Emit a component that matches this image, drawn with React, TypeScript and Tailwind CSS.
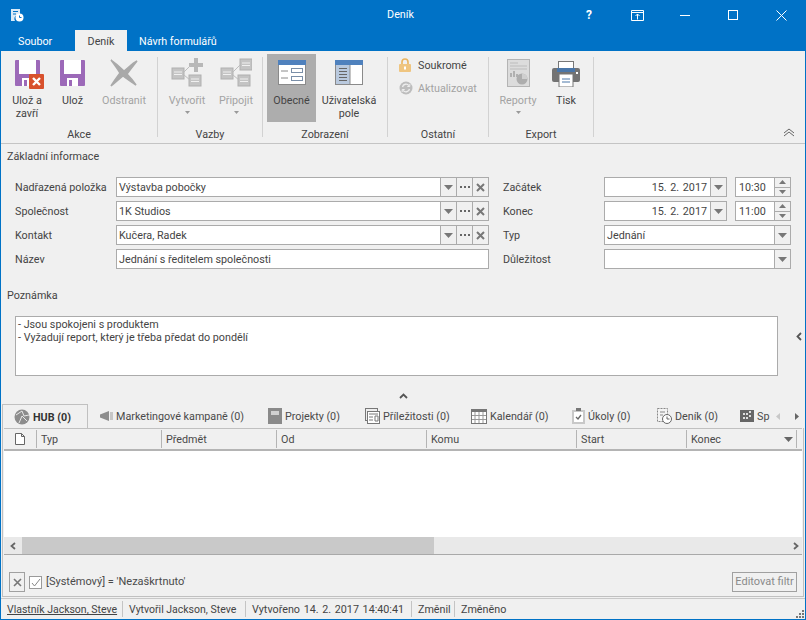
import { ReactNode } from "react";

const Caret = ({ color = "#777" }: { color?: string }) => (
  <svg width="9" height="5" viewBox="0 0 9 5"><path d="M0 0h9L4.5 5z" fill={color} /></svg>
);

function SaveIcon() {
  return (
    <svg width="25" height="26" viewBox="0 0 25 26">
      <rect width="25" height="26" rx="1" fill="#9c69b8" />
      <rect x="4" y="0" width="17" height="14" fill="#fff" />
      <rect x="7" y="18" width="11" height="8" fill="#fff" />
      <rect x="9" y="20" width="3" height="6" fill="#9c69b8" />
    </svg>
  );
}

function BigX() {
  return (
    <svg width="30" height="29" viewBox="0 0 30 29">
      <path d="M2 2C8 6 12 10 15 13C20 9 24 5 28 3C24 8 21 12 18 16C22 20 25 24 27 27C22 24 18 21 14 18C10 21 6 25 2 28C5 23 8 19 11 15C8 10 5 6 2 2z" fill="#a9a9a9" stroke="#a9a9a9" strokeWidth="1.500" />
    </svg>
  );
}

function TreeIcon({ plus }: { plus?: boolean }) {
  const node = (x: number, y: number) => (
    <g>
      <rect x={x} y={y} width="12" height="11" fill="#c4c4c4" stroke="#b0b0b0" />
      <path d={`M${x + 2} ${y + 4}h8M${x + 2} ${y + 6.5}h8`} stroke="#f0f0f0" />
    </g>
  );
  return (
    <svg width="32" height="30" viewBox="0 0 32 30">
      {node(1, 10)}
      {node(18, 17)}
      {plus ? <path d="M23 0h4v5h5v4h-5v5h-4V9h-5V5h5z" fill="#b8b8b8" /> : node(20, 1)}
      <path d="M13 14l7-7M13 17l6 5" stroke="#bdbdbd" fill="none" />
    </svg>
  );
}

function ObecneIcon() {
  return (
    <svg width="28" height="25" viewBox="0 0 28 25">
      <rect x=".5" y=".5" width="27" height="24" fill="#fff" stroke="#8a8a8a" />
      <rect width="28" height="5" fill="#4f81bd" />
      <path d="M3 11h7M3 18h7" stroke="#8a8a8a" />
      <rect x="13.5" y="8.5" width="11" height="4" fill="#fff" stroke="#7a8fa8" />
      <rect x="13.5" y="16.5" width="11" height="4" fill="#fff" stroke="#7a8fa8" />
    </svg>
  );
}

function UserFieldsIcon() {
  return (
    <svg width="28" height="25" viewBox="0 0 28 25">
      <rect x=".5" y=".5" width="27" height="24" fill="#fff" stroke="#8a8a8a" />
      <rect x="1" y="5" width="14" height="19" fill="#b9c9de" />
      <rect width="28" height="5" fill="#4f81bd" />
      <path d="M4 8.5h8M4 11.5h8M4 14.5h8M4 17.5h8M4 20.5h8" stroke="#666" />
      <path d="M15 5v19" stroke="#8a8a8a" />
    </svg>
  );
}

function ReportIcon() {
  return (
    <svg width="23" height="28" viewBox="0 0 23 28">
      <rect x=".5" y=".5" width="22" height="27" fill="#dcdcdc" stroke="#b4b4b4" />
      <path d="M3 4h8M3 7h17M3 10h17" stroke="#bcbcbc" />
      <path d="M3 18h2v-4h-2zM6 18h2v-6h-2zM9 18h2v-3h-2z" fill="#b0b0b0" />
      <circle cx="15" cy="20" r="5.5" fill="#adadad" />
      <path d="M15 20v-5.5a5.5 5.5 0 0 1 5.5 5.5z" fill="#cfcfcf" />
    </svg>
  );
}

function PrinterIcon() {
  return (
    <svg width="28" height="26" viewBox="0 0 28 26">
      <rect x="6.5" y=".5" width="15" height="11" fill="#fff" stroke="#777" />
      <rect y="7" width="28" height="14" rx="2" fill="#737373" />
      <rect x="5" y="7" width="18" height="4" fill="#4a76a8" />
      <rect x="7" y="13" width="14" height="13" fill="#fff" stroke="#777" />
      <path d="M10 18h8M10 21h8" stroke="#4a76a8" />
      <rect x="24" y="11" width="2" height="2" fill="#fff" />
    </svg>
  );
}

function LockIcon() {
  return (
    <svg width="12" height="14" viewBox="0 0 12 14">
      <path d="M3 6V4a3 3 0 0 1 6 0v2" fill="none" stroke="#e9b45f" strokeWidth="1.6" />
      <rect y="6" width="12" height="8" rx="1" fill="#efc580" />
      <rect x="5" y="8.5" width="2" height="3" fill="#fff" />
    </svg>
  );
}

function RefreshIcon() {
  return (
    <svg width="14" height="14" viewBox="0 0 14 14">
      <circle cx="7" cy="7" r="6.5" fill="#bdbdbd" />
      <path d="M3.5 6a3.6 3.6 0 0 1 6.4-1.4M10.5 8a3.6 3.6 0 0 1-6.4 1.4" fill="none" stroke="#eee" strokeWidth="1.3" />
      <path d="M10.8 3v2.5H8.300M3.200 11V8.500h2.500" fill="none" stroke="#eee" />
    </svg>
  );
}

function RibbonButton({ icon, label, disabled, caret, selected, className }: { icon: ReactNode; label: ReactNode; disabled?: boolean; caret?: boolean; selected?: boolean; className: string }) {
  return (
    <div className={`h-[68px] flex flex-col items-center pt-[4px] shrink-0 ${selected ? "bg-[#adadad]" : ""} ${className}`}>
      <div className="h-[32px] flex items-start justify-center relative">{icon}</div>
      <div className={`mt-[4px] text-center leading-[13px] whitespace-nowrap ${disabled ? "text-[#a3a3a3]" : "text-[#444]"}`}>{label}</div>
      {caret && <div className="mt-[4px] flex"><svg width="5" height="3" viewBox="0 0 5 3"><path d="M0 0h5L2.500 3z" fill="#999" /></svg></div>}
    </div>
  );
}

const Sep = () => <div className="w-px h-[80px] mt-[6px] bg-[#d2d2d2] shrink-0" />;

function Group({ label, width, children }: { label: string; width: string; children: ReactNode }) {
  return (
    <div className={`flex flex-col shrink-0 ${width}`}>
      <div className="h-[68px] flex mt-[3px]">{children}</div>
      <div className="h-[13px] mt-[6px] leading-[13px] text-center text-[#444]">{label}</div>
    </div>
  );
}

function Ribbon() {
  return (
    <div className="h-[93px] bg-[#f0f0f0] border-b border-[#c4c4c4] flex relative shrink-0">
      <Group label="Akce" width="w-[156px]">
        <RibbonButton
          className="w-[50px] ml-[1px]"
          icon={<div className="relative mt-[2px]"><SaveIcon /><div className="absolute left-[14px] top-[14px] w-[15px] h-[15px] bg-[#d8512d] rounded-[1px] flex items-center justify-center"><svg width="9" height="9" viewBox="0 0 9 9"><path d="M1 1l7 7M8 1l-7 7" stroke="#fff" strokeWidth="2.400" /></svg></div></div>}
          label={<>Ulož a<br />zavří</>}
        />
        <RibbonButton className="w-[41px]" icon={<div className="mt-[2px]"><SaveIcon /></div>} label="Ulož" />
        <RibbonButton className="w-[62px]" disabled icon={<BigX />} label="Odstranit" />
      </Group>
      <Sep />
      <Group label="Vazby" width="w-[104px]">
        <RibbonButton className="w-[52px] ml-[3px]" disabled caret icon={<TreeIcon plus />} label="Vytvořit" />
        <RibbonButton className="w-[46px]" disabled caret icon={<TreeIcon />} label="Připojit" />
      </Group>
      <Sep />
      <Group label="Zobrazení" width="w-[124px]">
        <RibbonButton className="w-[49px] ml-[4px]" selected icon={<div className="mt-[2px]"><ObecneIcon /></div>} label="Obecné" />
        <RibbonButton className="w-[66px]" icon={<div className="mt-[2px]"><UserFieldsIcon /></div>} label={<>Uživatelská<br />pole</>} />
      </Group>
      <Sep />
      <Group label="Ostatní" width="w-[100px]">
        <div className="flex flex-col pl-[11px] pt-[4px] gap-[9px]">
          <div className="flex items-center gap-[7px] h-[14px] text-[#444]"><LockIcon /><span className="pt-[2px]">Soukromé</span></div>
          <div className="flex items-center gap-[5px] h-[14px] text-[#a3a3a3]"><RefreshIcon /><span className="pt-[2px]">Aktualizovat</span></div>
        </div>
      </Group>
      <Sep />
      <Group label="Export" width="w-[104px]">
        <RibbonButton className="w-[52px] ml-[3px]" disabled caret icon={<div className="mt-[1px]"><ReportIcon /></div>} label="Reporty" />
        <RibbonButton className="w-[44px]" icon={<div className="mt-[3px]"><PrinterIcon /></div>} label="Tisk" />
      </Group>
      <Sep />
      <div className="flex-1 flex justify-end items-end pr-[10px] pb-[6px]">
        <svg width="12" height="9" viewBox="0 0 12 9"><path d="M1 5l5-4 5 4M1 8l5-4 5 4" fill="none" stroke="#666" /></svg>
      </div>
    </div>
  );
}

const inputBox = "h-[20px] bg-white border border-[#ababab] flex items-center";

function GlyphButton({ children, width = "w-[16px]" }: { children: ReactNode; width?: string }) {
  return <div className={`${width} h-full bg-[#f0f0f0] border-l border-[#ababab] flex items-center justify-center shrink-0`}>{children}</div>;
}

function Lookup({ value }: { value: string }) {
  return (
    <div className={`${inputBox} w-[373px]`}>
      <span className="flex-1 pl-[2px] pt-[2px] text-[#444]">{value}</span>
      <GlyphButton><Caret /></GlyphButton>
      <GlyphButton><svg width="10" height="2" viewBox="0 0 10 2"><path d="M0 0h2v2H0zM4 0h2v2H4zM8 0h2v2H8z" fill="#666" /></svg></GlyphButton>
      <GlyphButton><svg width="9" height="9" viewBox="0 0 9 9"><path d="M1 1l7 7M8 1l-7 7" stroke="#777" strokeWidth="2" /></svg></GlyphButton>
    </div>
  );
}

function DateTime({ date, time }: { date: string; time: string }) {
  return (
    <div className="flex w-[187px] justify-between">
      <div className={`${inputBox} w-[123px]`}>
        <span className="flex-1 text-right pr-[3px] pt-[2px] text-[#444] [word-spacing:1px]">{date}</span>
        <GlyphButton width="w-[16px]"><Caret /></GlyphButton>
      </div>
      <div className={`${inputBox} w-[56px]`}>
        <span className="flex-1 pl-[3px] pt-[2px] text-[#444]">{time}</span>
        <div className="w-[16px] h-full bg-[#f0f0f0] border-l border-[#ababab] flex flex-col items-center">
          <div className="flex-1 w-full flex items-center justify-center border-b border-[#ababab]"><svg width="7" height="4" viewBox="0 0 7 4"><path d="M0 4h7L3.500 0z" fill="#777" /></svg></div>
          <div className="flex-1 w-full flex items-center justify-center"><svg width="7" height="4" viewBox="0 0 7 4"><path d="M0 0h7L3.500 4z" fill="#777" /></svg></div>
        </div>
      </div>
    </div>
  );
}

function Select({ value }: { value: string }) {
  return (
    <div className={`${inputBox} w-[187px]`}>
      <span className="flex-1 pl-[2px] pt-[2px] text-[#444]">{value}</span>
      <GlyphButton><Caret /></GlyphButton>
    </div>
  );
}

function FormRow({ label, left, rightLabel, right }: { label: string; left: ReactNode; rightLabel: string; right: ReactNode }) {
  return (
    <div className="flex h-[20px] items-center">
      <div className="w-[101px] pt-[2px] text-[#444]">{label}</div>
      {left}
      <div className="w-[101px] ml-[14px] pt-[2px] text-[#444]">{rightLabel}</div>
      {right}
    </div>
  );
}

function Form() {
  return (
    <div className="h-[260px] bg-[#f0f0f0] pl-[14px] flex flex-col shrink-0 relative">
      <div className="ml-[-8px] h-[14px] mt-[6px] leading-[14px] text-[#444]">Základní informace</div>
      <div className="flex flex-col gap-[4px] mt-[13px]">
        <FormRow label="Nadřazená položka" left={<Lookup value="Výstavba pobočky" />} rightLabel="Začátek" right={<DateTime date="15. 2. 2017" time="10:30" />} />
        <FormRow label="Společnost" left={<Lookup value="1K Studios" />} rightLabel="Konec" right={<DateTime date="15. 2. 2017" time="11:00" />} />
        <FormRow label="Kontakt" left={<Lookup value="Kučera, Radek" />} rightLabel="Typ" right={<Select value="Jednání" />} />
        <FormRow
          label="Název"
          left={<div className={`${inputBox} w-[373px] text-[#444]`}><span className="pl-[2px] pt-[2px]">Jednání s ředitelem společnosti</span></div>}
          rightLabel="Důležitost"
          right={<Select value="" />}
        />
      </div>
      <div className="ml-[-8px] h-[14px] mt-[20px] leading-[14px] text-[#444]">Poznámka</div>
      <div className="flex mt-[13px]">
        <div className="w-[763px] h-[60px] bg-white border border-[#ababab] pl-[2px] pt-[1px] leading-[13px] text-[#444]">
          - Jsou spokojeni s produktem<br />- Vyžadují report, který je třeba předat do pondělí
        </div>
        <div className="flex items-start pt-[16px] pl-[18px]">
          <svg width="6" height="9" viewBox="0 0 6 9"><path d="M5 1L1.500 4.500 5 8" fill="none" stroke="#555" strokeWidth="1.800" /></svg>
        </div>
      </div>
      <div className="flex justify-center mt-[17px] pr-[14px]">
        <svg width="9" height="6" viewBox="0 0 9 6"><path d="M1 5l3.500-3.500L8 5" fill="none" stroke="#555" strokeWidth="1.800" /></svg>
      </div>
    </div>
  );
}

function Tab({ icon, label, width, active }: { icon: ReactNode; label: string; width: string; active?: boolean }) {
  return (
    <div className={`${width} shrink-0 flex items-center h-[24px] ${active ? "border border-b-0 border-[#c0c0c0] h-[25px] -mb-px bg-[#f0f0f0] relative pl-[11px] font-bold text-[#333]" : "text-[#4a4a4a]"} gap-[3px] whitespace-nowrap overflow-hidden`}>
      {icon}
      <span className="pt-[2px]">{label}</span>
    </div>
  );
}

function Tabs() {
  return (
    <div className="h-[24px] flex items-center bg-[#f0f0f0] pl-[1px] relative shrink-0 overflow-hidden">
      <Tab active width="w-[86px]" label="HUB (0)" icon={
        <svg width="16" height="16" viewBox="0 0 16 16"><circle cx="8" cy="8" r="7.500" fill="#8c8c8c" /><path d="M2 6l6-4 2 5 5-1M5 14l3-7 5 5" stroke="#e8e8e8" fill="none" /></svg>
      } />
      <Tab width="w-[180px] pl-[12px]" label="Marketingové kampaně (0)" icon={
        <svg width="13" height="10" viewBox="0 0 13 10"><path d="M0 3.500L9 0v10L0 6.500z" fill="#8d8d8d" /><rect x="10" y="1" width="3" height="8" fill="#c6c6c6" /></svg>
      } />
      <Tab width="w-[97px]" label="Projekty (0)" icon={
        <svg width="14" height="16" viewBox="0 0 14 16"><rect width="14" height="16" fill="#8a8a8a" /><rect x="3" y="3" width="8" height="4" fill="#d0d0d0" /></svg>
      } />
      <Tab width="w-[106px]" label="Příležitosti (0)" icon={
        <svg width="15" height="16" viewBox="0 0 15 16"><rect x=".5" y=".5" width="12" height="12" fill="#eee" stroke="#777" /><rect x="2.500" y="3.500" width="12" height="12" fill="#fff" stroke="#777" /><path d="M4 6h9M4 9h4M4 12h4M10 8h3v5h-3z" stroke="#777" fill="none" /></svg>
      } />
      <Tab width="w-[101px]" label="Kalendář (0)" icon={
        <svg width="16" height="15" viewBox="0 0 16 15"><rect x=".5" y=".5" width="15" height="14" fill="#fff" stroke="#777" /><rect width="16" height="3" fill="#777" /><path d="M4 3v11M8 3v11M12 3v11M1 6.500h14M1 10.500h14" stroke="#999" /></svg>
      } />
      <Tab width="w-[85px]" label="Úkoly (0)" icon={
        <svg width="13" height="16" viewBox="0 0 13 16"><rect y="2" width="13" height="14" fill="#c8c8c8" /><rect x="2" y="4" width="9" height="10" fill="#fff" /><rect x="4" width="5" height="3" fill="#777" /><path d="M4 9l2 2 3-4" stroke="#666" fill="none" strokeWidth="1.300" /></svg>
      } />
      <Tab width="w-[83px]" label="Deník (0)" icon={
        <svg width="15" height="16" viewBox="0 0 15 16"><rect x=".5" y=".5" width="10" height="13" fill="#f4f4f4" stroke="#888" strokeDasharray="2 1" /><path d="M3 4h5M3 7h3" stroke="#888" /><circle cx="10" cy="11" r="4.500" fill="#fff" stroke="#666" /><path d="M10 8.500V11h2.500" stroke="#666" fill="none" /></svg>
      } />
      <div className="w-[30px] shrink-0 flex items-center gap-[3px] text-[#4a4a4a] whitespace-nowrap">
        <svg className="shrink-0" width="14" height="12" viewBox="0 0 14 12"><rect width="14" height="12" fill="#666" /><path d="M3 3h2v2H3zM6 3h2v2H6zM9 1h2v2H9zM9 5h2v2H9zM3 7h2v2H3zM6 7h2v2H6z" fill="#ddd" /></svg>
        <span className="pt-[2px]">Sp</span>
      </div>
      <div className="ml-[6px]"><svg width="4" height="7" viewBox="0 0 4 7"><path d="M4 0v7L0 3.500z" fill="#c8c8c8" /></svg></div>
      <div className="ml-[15px]"><svg width="4" height="7" viewBox="0 0 4 7"><path d="M0 0v7l4-3.500z" fill="#666" /></svg></div>
    </div>
  );
}

const columns = [
  { label: "Typ", width: "w-[125px]" },
  { label: "Předmět", width: "w-[115px]" },
  { label: "Od", width: "w-[150px]" },
  { label: "Komu", width: "w-[150px]" },
  { label: "Start", width: "w-[110px]" },
];

function Grid() {
  return (
    <div className="h-[127px] flex flex-col border-l border-r border-[#c0c0c0] mx-[1px] shrink-0 pl-[1px] pr-[1px]">
      <div className="h-[23px] flex bg-[#f0f0f0] border-b-2 border-[#b4b4b4] shrink-0 border-t border-t-[#c0c0c0] text-[#4a4a4a]">
        <div className="w-[33px] flex items-center justify-center border-r border-[#b4b4b4] my-[1px]">
          <svg width="10" height="12" viewBox="0 0 10 12"><path d="M.5.500h6l3 3v8h-9zM6.500.500v3h3" fill="#fff" stroke="#666" /></svg>
        </div>
        {columns.map((c) => (
          <div key={c.label} className={`${c.width} pl-[4px] pt-[3px] flex items-center border-r border-[#b4b4b4] my-[1px]`}>{c.label}</div>
        ))}
        <div className="w-[110px] pl-[4px] flex items-center justify-between pr-[3px] border-r border-[#b4b4b4] my-[1px]">
          <span className="pt-[3px]">Konec</span><Caret color="#666" />
        </div>
      </div>
      <div className="flex-1 bg-white" />
      <div className="h-[18px] bg-[#e9e9e9] border-b border-[#a9a9a9] flex items-center shrink-0">
        <div className="w-[18px] flex justify-center"><svg width="6" height="8" viewBox="0 0 6 8"><path d="M5 1L1.500 4 5 7" fill="none" stroke="#666" strokeWidth="1.800" /></svg></div>
        <div className="w-[412px] h-full bg-[#c9c9c9]" />
        <div className="flex-1 flex justify-end pr-[3px] "><svg width="6" height="8" viewBox="0 0 6 8"><path d="M1 1l3.500 3L1 7" fill="none" stroke="#666" strokeWidth="1.800" /></svg></div>
      </div>
    </div>
  );
}

function FilterBar() {
  return (
    <div className="h-[42px] flex items-end pb-[4px] pl-[6px] pr-[6px] bg-[#f0f0f0] border-l border-r border-[#c0c0c0] mx-[1px] border-b shrink-0">
      <div className="w-[16px] h-[20px] border border-[#a0a0a0] flex items-center justify-center">
        <svg width="9" height="9" viewBox="0 0 9 9"><path d="M1 1l7 7M8 1l-7 7" stroke="#777" strokeWidth="1.600" /></svg>
      </div>
      <div className="w-[13px] h-[13px] ml-[4px] mb-[3px] border border-[#9a9a9a] bg-white flex items-center justify-center">
        <svg width="10" height="9" viewBox="0 0 10 9"><path d="M1 5l2.500 3L9 1" fill="none" stroke="#888" /></svg>
      </div>
      <div className="ml-[4px] h-[20px] flex items-center text-[11px] text-[#4a4a4a]">[Systémový] = 'Nezaškrtnuto'</div>
      <div className="ml-auto w-[65px] h-[20px] border border-[#a0a0a0] flex items-center justify-center text-[11px] text-[#8a8a8a] whitespace-nowrap">Editovat filtr</div>
    </div>
  );
}

function StatusCell({ children, last, className }: { children: ReactNode; last?: boolean; className: string }) {
  return <div className={`h-[16px] flex items-center whitespace-nowrap ${last ? "" : "border-r border-[#c4c4c4]"} ${className}`}>{children}</div>;
}

function StatusBar() {
  return (
    <div className="flex-1 flex items-center bg-[#f0f0f0] border-t border-[#c8c8c8] mt-[1px] pl-[6px] relative text-[#444]">
      <StatusCell className="w-[116px]"><span className="underline pt-[2px] text-[10.5px]">Vlastník Jackson, Steve</span></StatusCell>
      <StatusCell className="w-[123px] pl-[6px]"><span className="pt-[2px] text-[10.5px]">Vytvořil Jackson, Steve</span></StatusCell>
      <StatusCell className="w-[166px] pl-[6px]"><span className="pt-[2px] [word-spacing:1px]">Vytvořeno 14. 2. 2017 14:40:41</span></StatusCell>
      <StatusCell className="w-[43px] pl-[6px]"><span className="pt-[2px]">Změnil</span></StatusCell>
      <StatusCell last className="pl-[6px]"><span className="pt-[2px]">Změněno</span></StatusCell>
      <svg className="absolute right-[1px] bottom-[1px]" width="8" height="8" viewBox="0 0 8 8"><path d="M6 0h2v2H6zM3 3h2v2H3zM6 3h2v2H6zM0 6h2v2H0zM3 6h2v2H3zM6 6h2v2H6z" fill="#777" /></svg>
    </div>
  );
}

export default function App() {
  return (
    <div
      className="w-[806px] h-[620px] border border-t-0 border-[#0072c6] bg-[#f0f0f0] flex flex-col overflow-hidden text-[10.75px]"
      style={{ fontFamily: 'Roboto, "Noto Sans", sans-serif' }}
    >
      <div className="h-[30px] bg-[#0072c6] flex items-center text-white shrink-0">
        <div className="w-[29px] pl-[9px] shrink-0">
          <svg width="14" height="14" viewBox="0 0 14 14">
            <path d="M1 1h9v6H7a4 4 0 0 0-2 6H1z" fill="#d9eaf7" />
            <path d="M3 3.500h5M3 6h3" stroke="#0072c6" />
            <circle cx="9.500" cy="9.500" r="4" fill="#fff" />
            <path d="M9.500 7.500v2h2" stroke="#0072c6" fill="none" />
          </svg>
        </div>
        <div className="flex-1 pl-[206px] text-center">Deník</div>
        <div className="w-[48px] flex justify-center font-bold text-[12px]">?</div>
        <div className="w-[48px] flex justify-center">
          <svg width="13" height="11" viewBox="0 0 13 11"><path d="M.5.500h12v10H.5zM.5 2.500h12M6.500 9.500V4M4.500 6l2-2 2 2" fill="none" stroke="#fff" /></svg>
        </div>
        <div className="w-[48px] flex justify-center"><div className="w-[10px] h-px bg-white" /></div>
        <div className="w-[48px] flex justify-center"><div className="w-[10px] h-[10px] border border-white" /></div>
        <div className="w-[48px] flex justify-center">
          <svg width="11" height="11" viewBox="0 0 11 11"><path d="M.5.500l10 10M10.500.500l-10 10" stroke="#fff" /></svg>
        </div>
      </div>
      <div className="h-[21px] bg-[#0072c6] flex text-white shrink-0">
        <div className="w-[74px] pl-[17px] pt-[4px] flex items-center">Soubor</div>
        <div className="w-[52px] bg-[#f0f0f0] text-[#444] pt-[4px] flex items-center justify-center">Deník</div>
        <div className="pl-[12px] pt-[4px] flex items-center">Návrh formulářů</div>
      </div>
      <Ribbon />
      <Form />
      <Tabs />
      <Grid />
      <FilterBar />
      <StatusBar />
    </div>
  );
}
